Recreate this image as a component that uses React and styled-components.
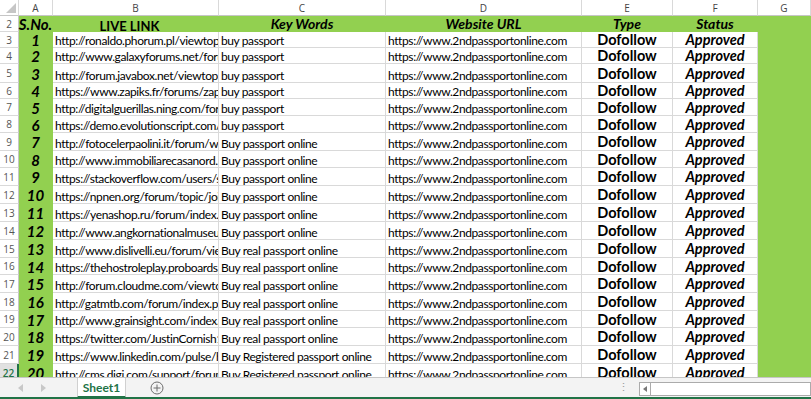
import React from 'react';
import styled, {createGlobalStyle, css} from 'styled-components';

const GlobalStyle = createGlobalStyle`
  html, body {
    margin: 0;
    padding: 0;
    background: #fff;
    overflow: hidden;
  }
`;

const rows = [
  {link: 'http://ronaldo.phorum.pl/viewtopic.php?f=1', kw: 'buy passport', h: 16},
  {link: 'http://www.galaxyforums.net/forum/topic', kw: 'buy passport', h: 16},
  {link: 'http://forum.javabox.net/viewtopic.php', kw: 'buy passport', h: 19},
  {link: 'https://www.zapiks.fr/forums/zapiks', kw: 'buy passport', h: 16},
  {link: 'http://digitalguerillas.ning.com/forum', kw: 'buy passport', h: 17},
  {link: 'https://demo.evolutionscript.com/forum', kw: 'buy passport', h: 17},
  {link: 'http://fotocelerpaolini.it/forum/welcome', kw: 'Buy passport online', h: 18},
  {link: 'http://www.immobiliarecasanord.it/forum', kw: 'Buy passport online', h: 17},
  {link: 'https://stackoverflow.com/users/story', kw: 'Buy passport online', h: 18},
  {link: 'https://npnen.org/forum/topic/join', kw: 'Buy passport online', h: 18},
  {link: 'https://yenashop.ru/forum/index.php', kw: 'Buy passport online', h: 18},
  {link: 'http://www.angkornationalmuseum.com', kw: 'Buy passport online', h: 18},
  {link: 'http://www.dislivelli.eu/forum/viewtopic', kw: 'Buy real passport online', h: 18},
  {link: 'https://thehostroleplay.proboards.com', kw: 'Buy real passport online', h: 17},
  {link: 'http://forum.cloudme.com/viewtopic.php', kw: 'Buy real passport online', h: 18},
  {link: 'http://gatmtb.com/forum/index.php', kw: 'Buy real passport online', h: 18},
  {link: 'http://www.grainsight.com/index.php', kw: 'Buy real passport online', h: 17},
  {link: 'https://twitter.com/JustinCornish1', kw: 'Buy real passport online', h: 18},
  {link: 'https://www.linkedin.com/pulse/how', kw: 'Buy Registered passport online', h: 18},
  {link: 'http://cms.digi.com/support/forum', kw: 'Buy Registered passport online', h: 18},
];

const columns = ['A', 'B', 'C', 'D', 'E', 'F', 'G'];

const GREEN = '#92d050';
const GRID = '#d9d9d9';
const FONT = `Lato, "Open Sans", "Liberation Sans", sans-serif`;

export default function App() {
  return (
    <Window>
      <GlobalStyle />
      <Sheet style={{gridTemplateRows: `16px 16px ${rows.map(r => r.h + 'px').join(' ')}`}}>
        <Corner>
          <svg width="10" height="10" viewBox="0 0 10 10">
            <polygon points="10,0 10,10 0,10" fill="#c6c6c6" />
          </svg>
        </Corner>
        {columns.map(c => (
          <ColHead key={c}>{c}</ColHead>
        ))}

        <RowHead>2</RowHead>
        <Cell $green $kind="num">S.No.</Cell>
        <Cell $green $kind="live">LIVE LINK</Cell>
        <Cell $green $kind="head">Key Words</Cell>
        <Cell $green $kind="head">Website URL</Cell>
        <Cell $green $kind="head">Type</Cell>
        <Cell $green $kind="head">Status</Cell>
        <Cell $green />

        {rows.map((r, i) => (
          <React.Fragment key={i}>
            <RowHead $selected={i === rows.length - 1}>{i + 3}</RowHead>
            <Cell $green $kind="num">{i + 1}</Cell>
            <Cell>{r.link}</Cell>
            <Cell>{r.kw}</Cell>
            <Cell>https://www.2ndpassportonline.com</Cell>
            <Cell $kind="type">Dofollow</Cell>
            <Cell $kind="status">Approved</Cell>
            <Cell $green />
          </React.Fragment>
        ))}
      </Sheet>

      <TabBar>
        <NavArrows>
          <svg width="6" height="8" viewBox="0 0 6 8">
            <polygon points="5,0 5,8 0,4" fill="#c8c8c8" />
          </svg>
          <svg width="6" height="8" viewBox="0 0 6 8">
            <polygon points="1,0 1,8 6,4" fill="#c8c8c8" />
          </svg>
        </NavArrows>
        <Tab>Sheet1</Tab>
        <AddSheet>
          <svg width="14" height="14" viewBox="0 0 14 14">
            <circle cx="7" cy="7" r="6" fill="none" stroke="#6d6d6d" strokeWidth="1" />
            <line x1="7" y1="3.5" x2="7" y2="10.5" stroke="#6d6d6d" strokeWidth="1" />
            <line x1="3.5" y1="7" x2="10.5" y2="7" stroke="#6d6d6d" strokeWidth="1" />
          </svg>
        </AddSheet>
        <Spacer />
        <Splitter>⋮</Splitter>
        <HScroll>
          <ScrollBtn>
            <svg width="4" height="6" viewBox="0 0 4 6">
              <polygon points="4,0 4,6 0,3" fill="#777" />
            </svg>
          </ScrollBtn>
          <ScrollTrack />
        </HScroll>
      </TabBar>
      <StatusLine />
    </Window>
  );
}

const Window = styled.div`
  width: 811px;
  height: 399px;
  display: flex;
  flex-direction: column;
  overflow: hidden;
  background: #fff;
`;

const Sheet = styled.div`
  display: grid;
  grid-template-columns: 19px 34px 166px 167px 196px 91px 85px 53px;
  height: 378px;
  flex: none;
  overflow: hidden;
  border-bottom: 1px solid #c6c6c6;
  box-sizing: border-box;
`;

const Corner = styled.div`
  display: flex;
  align-items: flex-end;
  justify-content: flex-end;
  padding: 0 2px 2px 0;
  border-right: 1px solid ${GRID};
  border-bottom: 1px solid #c6c6c6;
  box-sizing: border-box;
`;

const ColHead = styled.div`
  display: flex;
  align-items: center;
  justify-content: center;
  font-family: "Open Sans", "Noto Sans", sans-serif;
  font-size: 10px;
  color: #444;
  border-right: 1px solid ${GRID};
  border-bottom: 1px solid #c6c6c6;
  box-sizing: border-box;
`;

const RowHead = styled.div`
  display: flex;
  align-items: center;
  justify-content: center;
  font-family: "Open Sans", "Noto Sans", sans-serif;
  font-size: 10px;
  color: #555;
  background: #fff;
  border-right: 1px solid #c6c6c6;
  border-bottom: 1px solid ${GRID};
  box-sizing: border-box;
  ${p =>
    p.$selected &&
    css`
      background: #e1e1e1;
      color: #217346;
      font-weight: 600;
      border-right: 2px solid #217346;
    `}
`;

const boldCentered = css`
  justify-content: center;
  align-items: center;
  padding: 1px 0 0;
  overflow: visible;
  line-height: 14px;
  font-weight: 700;
  letter-spacing: 0;
`;

const kinds = {
  num: css`
    ${boldCentered}
    font-size: 15px;
    font-style: italic;
  `,
  live: css`
    ${boldCentered}
    padding: 5px 12px 0 0;
    font-size: 13px;
  `,
  head: css`
    ${boldCentered}
    padding: 0;
    font-size: 14px;
    font-style: italic;
  `,
  type: css`
    ${boldCentered}
    font-size: 14.5px;
  `,
  status: css`
    ${boldCentered}
    font-size: 14.5px;
    font-style: italic;
  `,
};

const Cell = styled.div`
  display: flex;
  align-items: flex-end;
  justify-content: flex-start;
  padding: 0 2px;
  box-sizing: border-box;
  overflow: hidden;
  white-space: nowrap;
  font-family: ${FONT};
  font-size: 12px;
  letter-spacing: -0.4px;
  line-height: 1;
  color: #000;
  background: ${p => (p.$green ? GREEN : '#fff')};
  border-right: 1px solid ${p => (p.$green ? GREEN : GRID)};
  border-bottom: 1px solid ${p => (p.$green ? GREEN : GRID)};
  ${p => p.$kind && kinds[p.$kind]}
`;

const TabBar = styled.div`
  flex: 1;
  display: flex;
  align-items: stretch;
  background: #f3f3f3;
  padding-left: 18px;
`;

const NavArrows = styled.div`
  display: flex;
  align-items: center;
  gap: 16px;
  width: 59px;
`;

const Tab = styled.div`
  display: flex;
  align-items: center;
  justify-content: center;
  width: 49px;
  background: #fff;
  font-family: ${FONT};
  font-size: 12px;
  font-weight: 700;
  color: #217346;
  border-left: 1px solid #d0d0d0;
  border-right: 1px solid #d0d0d0;
  border-bottom: 2px solid #217346;
  box-sizing: border-box;
  margin-bottom: -1px;
`;

const AddSheet = styled.div`
  display: flex;
  align-items: center;
  margin-left: 24px;
`;

const Spacer = styled.div`
  flex: 1;
`;

const Splitter = styled.div`
  display: flex;
  align-items: center;
  color: #999;
  font-size: 11px;
  margin-right: 10px;
`;

const HScroll = styled.div`
  display: flex;
  align-items: center;
  width: 172px;
  padding-top: 2px;
`;

const ScrollBtn = styled.div`
  display: flex;
  align-items: center;
  justify-content: center;
  width: 10px;
  height: 12px;
  background: #fff;
  border: 1px solid #ababab;
  border-right: none;
`;

const ScrollTrack = styled.div`
  flex: 1;
  height: 12px;
  background: #fff;
  border: 1px solid #ababab;
`;

const StatusLine = styled.div`
  height: 2px;
  background: #217346;
`;
